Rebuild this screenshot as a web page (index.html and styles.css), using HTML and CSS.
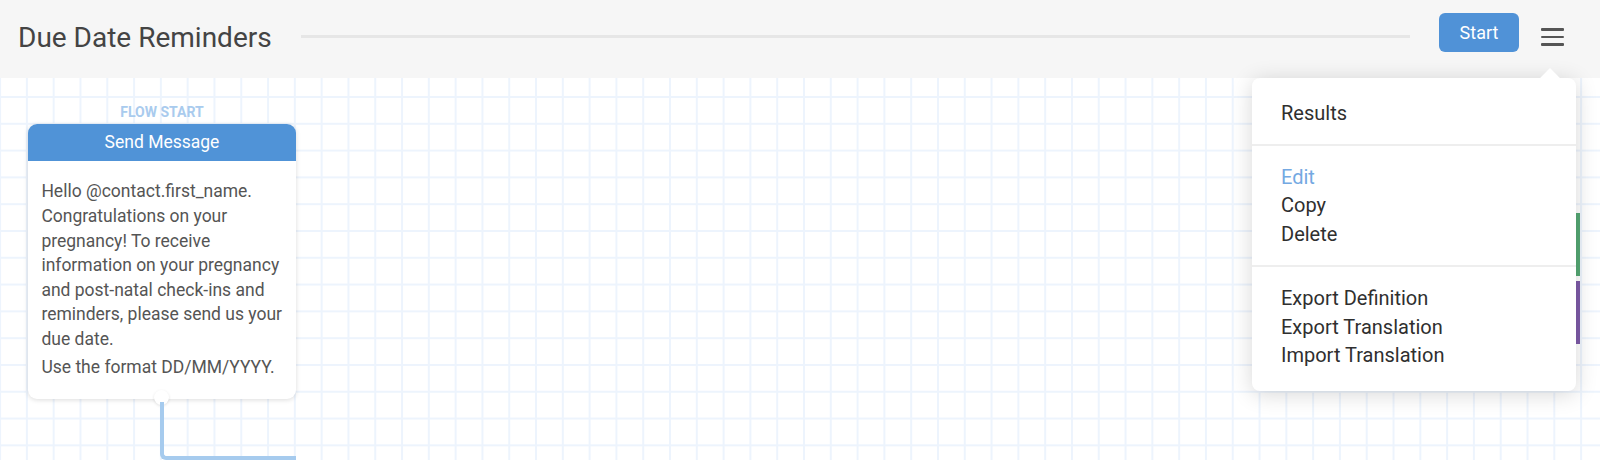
FILE: index.html
```html
<!DOCTYPE html>
<html lang="en">
<head>
  <meta charset="UTF-8" />
  <meta name="viewport" content="width=device-width, initial-scale=1.0"/>
  <title>Due Date Reminders</title>
  <link rel="stylesheet" href="styles.css">
</head>
<body>

<div class="header">
  <h1 class="title">Due Date Reminders</h1>
  <div class="title-rule"></div>
  <button class="start-btn">Start</button>
  <div class="menu-btn">
    <span></span><span></span><span></span>
  </div>

  <div class="menu">
    <div class="menu-section">
      <div class="menu-item">Results</div>
    </div>
    <div class="menu-section">
      <div class="menu-item active">Edit</div>
      <div class="menu-item">Copy</div>
      <div class="menu-item">Delete</div>
    </div>
    <div class="menu-section">
      <div class="menu-item">Export Definition</div>
      <div class="menu-item">Export Translation</div>
      <div class="menu-item">Import Translation</div>
    </div>
  </div>
</div>

<div class="canvas">
  <div class="node">
    <div class="flow-start">FLOW START</div>
    <div class="card">
      <div class="card-head">Send Message</div>
      <div class="card-body">
        <p>Hello @contact.first_name. Congratulations on your pregnancy! To receive information on your pregnancy and post-natal check-ins and reminders, please send us your due date.</p>
        <p>Use the format DD/MM/YYYY.</p>
      </div>
      <div class="exit"></div>
    </div>
  </div>
  <div class="connector"></div>
  <div class="edge-mark green"></div>
  <div class="edge-mark purple"></div>
</div>

</body>
</html>
```

FILE: styles.css
```css
body {
  margin: 0;
  font-family: Roboto, "Liberation Sans", Arial, sans-serif;
  background: #fff;
  width: 1600px;
  height: 460px;
  overflow: hidden;
}

/* header */
.header {
  position: relative;
  z-index: 2;
  display: flex;
  align-items: flex-start;
  height: 78px;
  padding: 0 36px 0 18px;
  background: #f6f6f6;
  box-sizing: border-box;
}
.title {
  margin: 21px 0 0 0;
  font-size: 28px;
  line-height: 34px;
  font-weight: 400;
  color: #444;
}
.title-rule {
  flex: 1;
  height: 3px;
  margin: 35px 29px 0 29px;
  background: #e6e6e6;
}
.start-btn {
  margin-top: 13px;
  width: 80px;
  height: 39px;
  border: none;
  border-radius: 6px;
  background: #5092d7;
  color: white;
  font-family: inherit;
  font-size: 18px;
  cursor: pointer;
}
.menu-btn {
  display: flex;
  flex-direction: column;
  gap: 5px;
  width: 23px;
  margin: 28px 0 0 22px;
}
.menu-btn span {
  height: 2.6px;
  border-radius: 1px;
  background: #555;
}

/* dropdown */
.menu {
  position: absolute;
  top: 78px;
  right: 24px;
  width: 324px;
  padding: 4px 0 5px 0;
  background: white;
  border-radius: 8px;
  box-shadow: 0 3px 22px rgba(0,0,0,0.16);
}
.menu::before {
  content: "";
  position: absolute;
  top: -7px;
  left: 291px;
  width: 14px;
  height: 14px;
  background: white;
  transform: rotate(45deg);
}
.menu-section {
  position: relative;
  padding: 17px 0 16px 0;
  border-bottom: 2px solid #eee;
}
.menu-section:last-child { border-bottom: none; }
.menu-item {
  padding-left: 29px;
  font-size: 20px;
  line-height: 28.7px;
  color: #2f2f2f;
  cursor: pointer;
}
.menu-item.active { color: #74a9e2; }

/* canvas */
.canvas {
  position: relative;
  z-index: 1;
  height: 382px;
  overflow: hidden;
  background-color: #fff;
  background-image:
    linear-gradient(to right, #edf4fd 1.6px, transparent 1.6px),
    linear-gradient(to bottom, #edf4fd 1.6px, transparent 1.6px);
  background-size: 26.8px 26.8px;
  background-position: 25.9px 18px;
}
.node {
  position: absolute;
  left: 28px;
  top: 24.6px;
  width: 268px;
}
.flow-start {
  text-align: center;
  font-size: 14px;
  line-height: 18px;
  font-weight: 700;
  color: #a9cbee;
  margin-bottom: 3.7px;
}
.card {
  position: relative;
  background: white;
  border-radius: 9px;
  box-shadow: 0 1px 5px rgba(0,0,0,0.14);
}
.card-head {
  height: 36.7px;
  line-height: 36.7px;
  text-align: center;
  background: #5093d7;
  color: white;
  font-size: 17.5px;
  border-radius: 9px 9px 0 0;
}
.card-body {
  padding: 18.4px 10px 19.3px 13.4px;
  font-size: 17.5px;
  line-height: 24.6px;
  color: #555;
}
.card-body p { margin: 0; }
.card-body p + p { margin-top: 3.8px; }
.exit {
  position: absolute;
  left: 126px;
  bottom: -6px;
  width: 15px;
  height: 15px;
  border-radius: 50%;
  background: white;
  box-shadow: 0 1px 3px rgba(0,0,0,0.12);
}
.connector {
  position: absolute;
  left: 160px;
  top: 324px;
  width: 132px;
  height: 54px;
  border-left: 4px solid #a6cbee;
  border-bottom: 4px solid #a6cbee;
  border-bottom-left-radius: 6px;
}
.edge-mark {
  position: absolute;
  left: 1576px;
  width: 4px;
  height: 63px;
}
.edge-mark.green { top: 135px; background: #55a874; }
.edge-mark.purple { top: 203px; background: #7e5ba8; }
```
